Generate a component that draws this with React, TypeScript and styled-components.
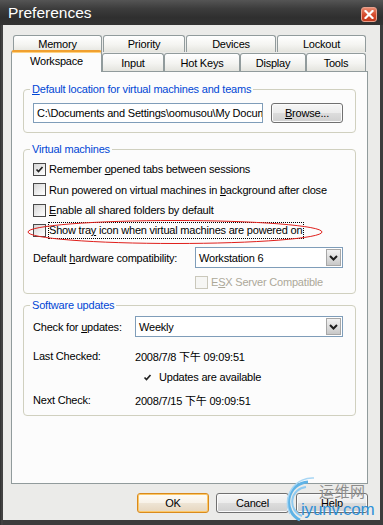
import React from "react";
import styled, { createGlobalStyle, css } from "styled-components";

const Global = createGlobalStyle`
  html, body { margin: 0; padding: 0; width: 383px; height: 525px; overflow: hidden; background: #3a3a3a; }
  * { box-sizing: border-box; }
`;

const FONT = `"Liberation Sans", Arial, "Noto Sans CJK TC", sans-serif`;

const Window = styled.div`
  position: relative;
  width: 383px;
  height: 525px;
  background: linear-gradient(90deg, #2e2e2e, #474747 2px, #3c3c3c 3px);
  display: flex;
  flex-direction: column;
  font-family: ${FONT};
  font-size: 11px;
  letter-spacing: -0.2px;
  color: #000;
  overflow: hidden;
`;

const TitleBar = styled.div`
  height: 25px;
  flex: none;
  display: flex;
  align-items: center;
  justify-content: space-between;
  padding: 0 6px 0 8px;
  background: linear-gradient(#555555, #3c3c3c 35%, #2f2f2f 70%, #333333);
  color: #ffffff;
  font-size: 15.5px;
  letter-spacing: 0;
`;

const CloseButton = styled.div`
  width: 16px;
  height: 15px;
  margin-top: 3px;
  border: 1px solid #e8a08c;
  border-radius: 3px;
  background: linear-gradient(#e88a70, #d4482a 55%, #c23a1e);
  display: flex;
  align-items: center;
  justify-content: center;
`;

const Client = styled.div`
  flex: 1;
  margin: 0 3px 5px 3px;
  background: #ebebe9;
  padding: 10px 12px 0 8px;
  display: flex;
  flex-direction: column;
`;

const TabRow = styled.div<{ $top?: boolean }>`
  display: flex;
  flex: none;
  align-items: flex-end;
  ${(p) =>
    p.$top
      ? css`
          height: 17px;
          gap: 1px;
          padding-left: 2px;
        `
      : css`
          height: 19px;
        `}
`;

const Tab = styled.div<{ $w: number; $selected?: boolean; $top?: boolean }>`
  width: ${(p) => p.$w}px;
  height: ${(p) => (p.$top ? 17 : 18)}px;
  flex: none;
  border: 1px solid #919b9c;
  border-bottom: none;
  border-radius: 3px 3px 0 0;
  background: linear-gradient(#ffffff, #f4f4f1 55%, #e4e4de);
  display: flex;
  align-items: center;
  justify-content: center;
  color: #000;
  ${(p) =>
    p.$selected &&
    css`
      height: 22px;
      margin-bottom: -1px;
      position: relative;
      z-index: 2;
      background: #fcfcfc;
      border-top: 2px solid #f0a030;
      box-shadow: inset 0 1px 0 #ffd280;
      padding-bottom: 3px;
    `}
`;

const Panel = styled.div`
  height: 413px;
  flex: none;
  border: 1px solid #919b9c;
  background: #fcfcfc;
  padding: 10px 11px 0;
  display: flex;
  flex-direction: column;
`;

const Group = styled.fieldset<{ $pt: number; $pb: number; $mt?: number }>`
  margin: ${(p) => p.$mt ?? 0}px 0 0 0;
  min-width: 0;
  border: 1px solid #d0d0bf;
  border-radius: 4px;
  padding: ${(p) => p.$pt}px 12px ${(p) => p.$pb}px 9px;
`;

const GroupTitle = styled.legend`
  color: #0046d5;
  padding: 0 2px;
  margin-left: -3px;
  line-height: 14px;
`;

const Acc = styled.span`
  text-decoration: underline;
`;

const PathRow = styled.div`
  display: flex;
  gap: 8px;
  align-items: center;
`;

const TextBox = styled.div`
  width: 230px;
  height: 20px;
  border: 1px solid #7f9db9;
  background: #ffffff;
  padding: 0 0 0 3px;
  line-height: 18px;
  white-space: nowrap;
  overflow: hidden;
`;

const Button = styled.div<{ $w?: number; $default?: boolean }>`
  width: ${(p) => p.$w ?? 72}px;
  height: 20px;
  flex: none;
  border: 1px solid #707070;
  border-radius: 3px;
  background: linear-gradient(#f6f6f6, #ececec 48%, #dcdcdc 52%, #cfcfcf);
  box-shadow: inset 0 0 0 1px #fbfbfb;
  display: flex;
  align-items: center;
  justify-content: center;
  color: #000;
  ${(p) =>
    p.$default &&
    css`
      border-color: #d98a1c;
      box-shadow: inset 0 0 0 1px #fcc868;
      background: linear-gradient(#fffdf8, #f8f2e8 48%, #eee4d4 52%, #e6d6be);
    `}
`;

const CheckRow = styled.div`
  height: 20.5px;
  display: flex;
  align-items: center;
  gap: 3px;
`;

const Box = styled.span<{ $disabled?: boolean }>`
  width: 13px;
  height: 13px;
  flex: none;
  border: 1px solid #4a4a4a;
  background: linear-gradient(135deg, #d6d6d6, #f4f4f4 70%, #ffffff);
  display: flex;
  align-items: center;
  justify-content: center;
  ${(p) =>
    p.$disabled &&
    css`
      border-color: #cac8bb;
      background: #f6f6f4;
    `}
`;

const FocusLabel = styled.span`
  display: inline-block;
  line-height: 15px;
  padding: 0 1px 0 0;
  outline: 1px dotted #000;
  outline-offset: 0;
`;

const FieldRow = styled.div<{ $label: number; $mt: number }>`
  display: grid;
  grid-template-columns: ${(p) => p.$label}px 1fr;
  align-items: center;
  margin-top: ${(p) => p.$mt}px;
`;

const Select = styled.div`
  height: 21px;
  border: 1px solid #7f9db9;
  background: #ffffff;
  display: flex;
  align-items: center;
  justify-content: space-between;
  padding: 1px 1px 1px 3px;
`;

const ArrowButton = styled.div`
  width: 15px;
  height: 17px;
  border: 1px solid #a7a7a7;
  background: linear-gradient(#f2f2f2, #dedede 50%, #c8c8c8);
  display: flex;
  align-items: center;
  justify-content: center;
`;

const EsxRow = styled.div`
  height: 16px;
  margin-top: 6px;
  padding-left: 162px;
  display: flex;
  align-items: center;
  gap: 3px;
  color: #aca899;
`;

const InfoRow = styled.div<{ $mt: number }>`
  height: 18px;
  margin-top: ${(p) => p.$mt}px;
  display: grid;
  grid-template-columns: 102px 1fr;
  align-items: center;
`;

const Avail = styled.div<{ $mt: number }>`
  height: 18px;
  margin-top: ${(p) => p.$mt}px;
  display: flex;
  align-items: center;
  gap: 7px;
  padding-left: 110px;
`;

const ButtonRow = styled.div`
  display: flex;
  justify-content: flex-end;
  gap: 7px;
  margin-top: 9px;
`;

const Ellipse = styled.svg`
  position: absolute;
  left: 26px;
  top: 219px;
  pointer-events: none;
`;

const Watermark = styled.div`
  position: absolute;
  left: 278px;
  top: 474px;
  width: 105px;
  height: 51px;
  pointer-events: none;
`;

const WmArcs = styled.svg`
  position: absolute;
  left: 0;
  top: 0;
`;

const WmCn = styled.span`
  position: absolute;
  left: 41px;
  top: 8px;
  font-family: "Noto Sans CJK SC", sans-serif;
  font-size: 15px;
  line-height: 17px;
  color: #8c8c8c;
  letter-spacing: 0.5px;
`;

const WmEn = styled.span`
  position: absolute;
  left: 23px;
  top: 26px;
  font-family: "Liberation Sans", Arial, sans-serif;
  font-size: 17px;
  line-height: 20px;
  color: #2f90d8;
  letter-spacing: -0.2px;
`;

const Check = () => (
  <svg width="9" height="9" viewBox="0 0 9 9">
    <polyline points="1.5,4.5 3.5,6.5 7.5,2" fill="none" stroke="#222" strokeWidth="1.7" />
  </svg>
);

const Chevron = () => (
  <svg width="9" height="6" viewBox="0 0 9 6">
    <polyline points="1,1 4.5,4.5 8,1" fill="none" stroke="#1e1e1e" strokeWidth="2" />
  </svg>
);

export default function App() {
  return (
    <>
      <Global />
      <Window>
        <TitleBar>
          <span>Preferences</span>
          <CloseButton>
            <svg width="10" height="9" viewBox="0 0 10 9">
              <path d="M1.5 1 L8.5 8 M8.5 1 L1.5 8" stroke="#fff" strokeWidth="2.2" strokeLinecap="square" />
            </svg>
          </CloseButton>
        </TitleBar>
        <Client>
          <TabRow $top>
            <Tab $top $w={89}>Memory</Tab>
            <Tab $top $w={82}>Priority</Tab>
            <Tab $top $w={90}>Devices</Tab>
            <Tab $top $w={89}>Lockout</Tab>
          </TabRow>
          <TabRow>
            <Tab $w={91} $selected>Workspace</Tab>
            <Tab $w={62}>Input</Tab>
            <Tab $w={76}>Hot Keys</Tab>
            <Tab $w={66}>Display</Tab>
            <Tab $w={60}>Tools</Tab>
          </TabRow>
          <Panel>
            <Group $pt={7} $pb={9}>
              <GroupTitle>
                <Acc>D</Acc>efault location for virtual machines and teams
              </GroupTitle>
              <PathRow>
                <TextBox>C:\Documents and Settings\oomusou\My Documents\My Virtual Machines</TextBox>
                <Button>
                  <Acc>B</Acc>rowse...
                </Button>
              </PathRow>
            </Group>

            <Group $pt={3} $pb={3} $mt={9}>
              <GroupTitle>Virtual machines</GroupTitle>
              <CheckRow>
                <Box>
                  <Check />
                </Box>
                <span>
                  Remember <Acc>o</Acc>pened tabs between sessions
                </span>
              </CheckRow>
              <CheckRow>
                <Box />
                <span>
                  Run powered on virtual machines in <Acc>b</Acc>ackground after close
                </span>
              </CheckRow>
              <CheckRow>
                <Box />
                <span>
                  <Acc>E</Acc>nable all shared folders by default
                </span>
              </CheckRow>
              <CheckRow>
                <Box />
                <FocusLabel>
                  Show tra<Acc>y</Acc> icon when virtual machines are powered on
                </FocusLabel>
              </CheckRow>
              <FieldRow $label={162} $mt={6}>
                <span>
                  Default <Acc>h</Acc>ardware compatibility:
                </span>
                <Select>
                  <span>Workstation 6</span>
                  <ArrowButton>
                    <Chevron />
                  </ArrowButton>
                </Select>
              </FieldRow>
              <EsxRow>
                <Box $disabled />
                <span>
                  E<Acc>S</Acc>X Server Compatible
                </span>
              </EsxRow>
            </Group>

            <Group $pt={4} $pb={6} $mt={4}>
              <GroupTitle>Software updates</GroupTitle>
              <FieldRow $label={102} $mt={0}>
                <span>
                  Check for <Acc>u</Acc>pdates:
                </span>
                <Select>
                  <span>Weekly</span>
                  <ArrowButton>
                    <Chevron />
                  </ArrowButton>
                </Select>
              </FieldRow>
              <InfoRow $mt={10}>
                <span>Last Checked:</span>
                <span>2008/7/8 下午 09:09:51</span>
              </InfoRow>
              <Avail $mt={3}>
                <Check />
                <span>Updates are available</span>
              </Avail>
              <InfoRow $mt={5}>
                <span>Next Check:</span>
                <span>2008/7/15 下午 09:09:51</span>
              </InfoRow>
            </Group>
          </Panel>
          <ButtonRow>
            <Button $default>OK</Button>
            <Button $w={73}>Cancel</Button>
            <Button>Help</Button>
          </ButtonRow>
        </Client>

        <Ellipse width="300" height="27" viewBox="0 0 300 27">
          <ellipse cx="149" cy="13" rx="147" ry="11.5" fill="none" stroke="#e0201c" strokeWidth="1" />
        </Ellipse>

        <Watermark>
          <WmArcs width="50" height="51" viewBox="0 0 50 51">
            <path d="M30 8 A20 20 0 0 0 22 46" fill="none" stroke="#5fb3e6" strokeWidth="3" />
            <path d="M28 13 A15 15 0 0 0 24 42" fill="none" stroke="#8fcaf0" strokeWidth="2" />
            <path d="M36 4 A25 25 0 0 0 12 40" fill="none" stroke="#a8d6f4" strokeWidth="1.5" />
          </WmArcs>
          <WmCn>运维网</WmCn>
          <WmEn>iyunv.com</WmEn>
        </Watermark>
      </Window>
    </>
  );
}
